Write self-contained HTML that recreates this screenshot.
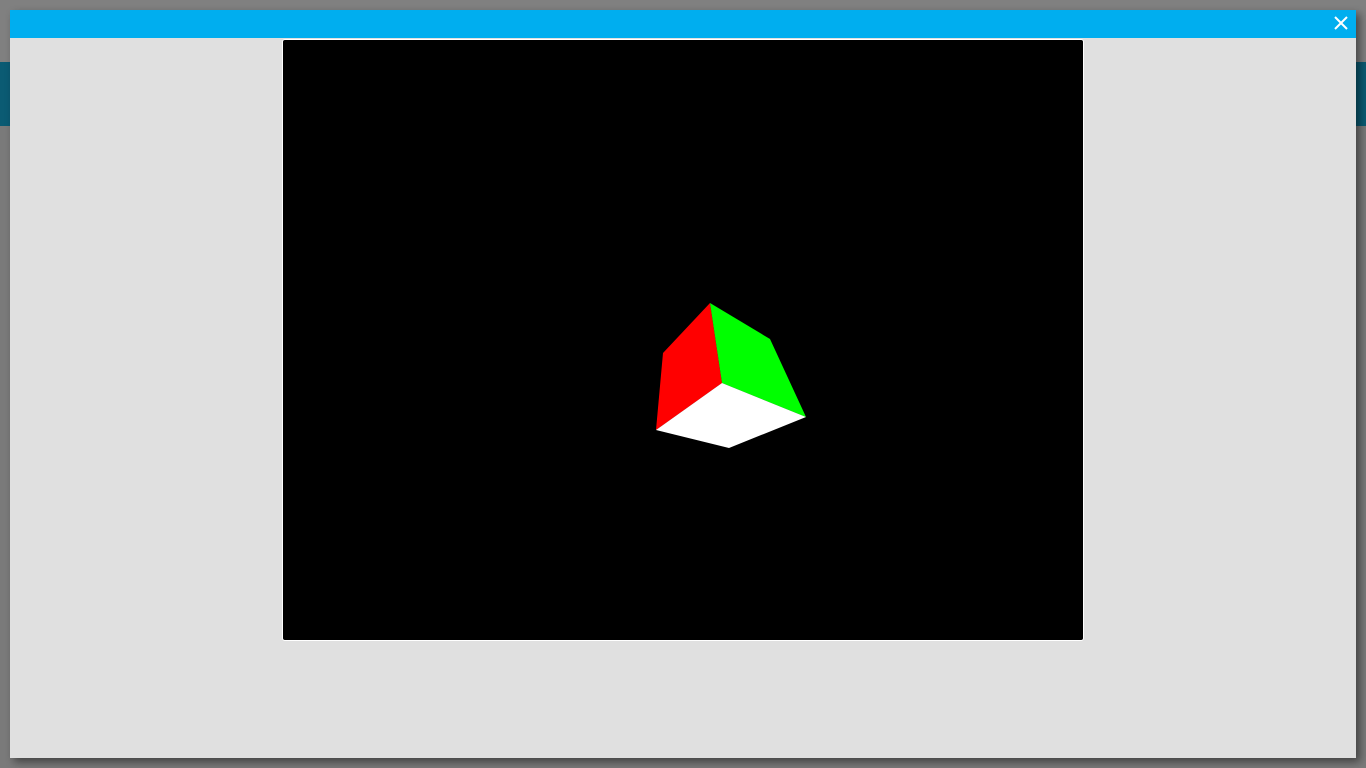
<!DOCTYPE html>
<html><head><meta charset="utf-8"><style>
html,body{margin:0;padding:0;width:1366px;height:768px;overflow:hidden;background:#7a7a7a;font-family:"Liberation Sans",sans-serif}
.topbg{position:absolute;left:0;top:0;width:1366px;height:62px;background:#808080}
.band{position:absolute;left:0;top:62px;width:1366px;height:64px;background:#0b5b73}
.modal{position:absolute;left:10px;top:10px;width:1346px;height:748px;background:#e0e0e0;box-shadow:4px 4px 8px rgba(0,0,0,.45)}
.bar{position:absolute;left:0;top:0;width:1346px;height:28px;background:#00aeef}
.x{position:absolute;right:6px;top:4px;width:18px;height:18px}
.canvas{position:absolute;left:272px;top:29px;width:800px;height:600px;background:#000;border:1px solid #fff;border-radius:3px}
</style></head><body>
<div class="topbg"></div><div class="band"></div>
<div class="modal">
<div class="bar"><svg class="x" viewBox="0 0 18 18"><path d="M3 3L15 15M15 3L3 15" stroke="#fff" stroke-width="2"/></svg></div>
<div class="canvas">
<svg width="800" height="600" viewBox="283 40 800 600" style="position:absolute;left:0;top:0">
<polygon points="710,303 663,353 656,430 722,383" fill="#f00"/>
<polygon points="710,303 770,339 806,417 722,383" fill="#0f0"/>
<polygon points="722,383 806,417 729,448 656,430" fill="#fff"/>
</svg>
</div>
</div>
</body></html>
